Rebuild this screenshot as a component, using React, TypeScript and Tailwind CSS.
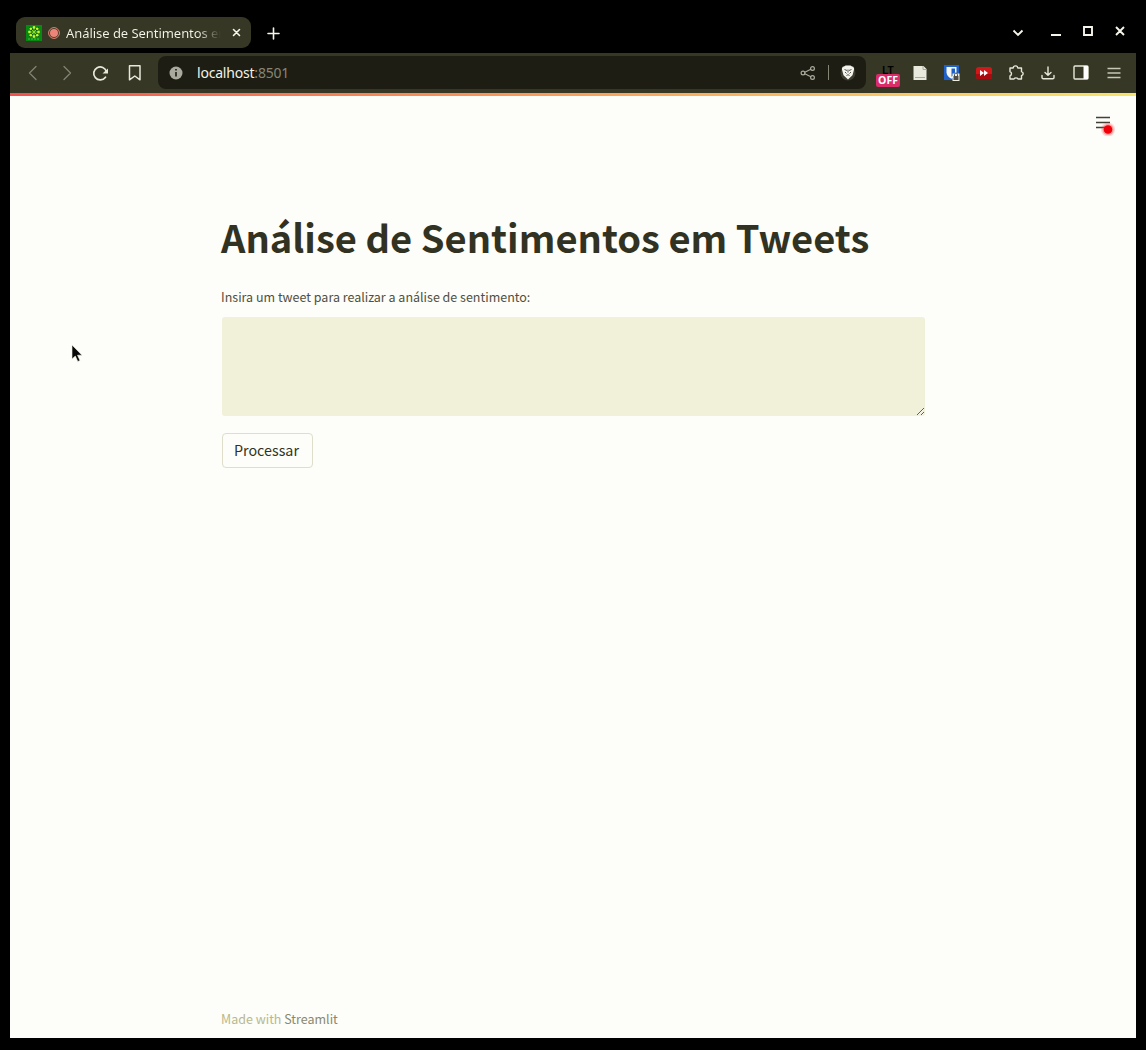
import React from 'react';

const stroke = { fill: 'none', stroke: 'currentColor', strokeLinecap: 'round', strokeLinejoin: 'round' } as const;

function TabStrip() {
  return (
    <div className="flex h-[53px] items-start pl-1.5 pt-[17px] text-[#f5f5e9]">
      <div className="flex h-[31px] w-[235px] items-center rounded-[9px] bg-[#373726] pl-2.5 pr-2.5">
        <svg width="16" height="16" viewBox="0 0 16 16" className="shrink-0">
          <path fill="#078a12" d="M0 0h16v16H0z" />
          <path fill="#045b0c" d="M3 2h10v10H3z" />
          <path d="M2 14h12" stroke="#4fbf3a" strokeDasharray="2 1" />
          <g fill="#c5f532">
            <circle cx="8" cy="2.500" r="1.400" /><circle cx="11.200" cy="3.800" r="1.400" />
            <circle cx="12.500" cy="7" r="1.400" /><circle cx="11.200" cy="10.200" r="1.400" />
            <circle cx="8" cy="11.500" r="1.400" /><circle cx="4.800" cy="10.200" r="1.400" />
            <circle cx="3.500" cy="7" r="1.400" /><circle cx="4.800" cy="3.800" r="1.400" />
          </g>
          <path d="M5 4l6 6M11 4l-6 6M8 3v8M4 7h8" stroke="#8be32a" strokeWidth=".9" />
        </svg>
        <svg width="12" height="12" viewBox="0 0 12 12" className="ml-1.5 shrink-0">
          <circle cx="6" cy="6" r="5.400" fill="#373726" stroke="#e58575" />
          <circle cx="6" cy="6" r="4" fill="#ee8578" />
        </svg>
        <span className="ml-1.5 w-[155px] overflow-hidden whitespace-nowrap bg-linear-to-r from-[#f5f5e9] from-85% to-[#373726] bg-clip-text font-['Noto_Sans'] text-[13px] leading-[20px] tracking-[-0.05px] text-transparent">Análise de Sentimentos em Tweets</span>
        <svg width="9" height="9" viewBox="0 0 9 9" className="ml-auto shrink-0" {...stroke} strokeWidth="1.600"><path d="M1.500 1.500l6 6M7.500 1.500l-6 6" /></svg>
      </div>
      <svg width="13" height="13" viewBox="0 0 13 13" className="ml-4 mt-[9.500px]" {...stroke} strokeWidth="1.600"><path d="M6.500 1v11M1 6.500h11" /></svg>
      <svg width="124" height="22" viewBox="0 0 124 22" className="ml-auto mr-[6px] mt-[3px]" {...stroke} strokeLinecap="butt" strokeLinejoin="miter" strokeWidth="1.900">
        <path d="M7.500 10.500l4.500 4.500 4.500-4.500M45 15h10M78 7h8v8h-8zM110 7l8 8M118 7l-8 8" />
      </svg>
    </div>
  );
}

function Toolbar() {
  return (
    <div className="flex h-[41px] items-center bg-[#373726] pb-[2px] text-[#e8e8da]">
      <svg width="138" height="24" viewBox="0 0 138 24" className="ml-2.5 shrink-0" {...stroke} strokeWidth="1.300">
        <path d="M16 5.500L9.500 12l6.500 6.500M44 5.500l6.500 6.500-6.500 6.500" stroke="#838374" />
        <path d="M85.500 16.200a6.500 6.500 0 1 1 1-5.500" strokeWidth="1.700" />
        <path d="M88 7.500v5h-5.500z" fill="currentColor" stroke="none" />
        <path d="M109.500 4.800h10.500v14l-5.200-3.800-5.300 3.800z" strokeWidth="1.500" />
      </svg>
      <div className="flex h-[33px] w-[708px] shrink-0 items-center rounded-lg bg-[#1d1d13] pl-[11px]">
        <svg width="14" height="14" viewBox="0 0 14 14"><circle cx="7" cy="7" r="6.500" fill="#aaaa9e" /><path d="M7 6v4.500M7 3v1.600" stroke="#1d1d13" strokeWidth="1.600" /></svg>
        <span className="ml-3.5 font-['Noto_Sans'] text-[14px] leading-5 tracking-[-0.200px] text-[#f2f2e6]">localhost<span className="text-[#858576]">:8501</span></span>
        <svg width="16" height="16" viewBox="0 0 16 16" className="ml-auto text-[#aaaa9c]" {...stroke} strokeWidth="1.200">
          <circle cx="3" cy="8" r="1.900" /><circle cx="12.500" cy="3.500" r="1.900" /><circle cx="12.500" cy="12.500" r="1.900" /><path d="M4.800 7.200l6-2.900M4.800 8.800l6 2.900" />
        </svg>
        <div className="ml-[12px] h-[15px] w-px bg-[#858575]" />
        <svg width="16" height="18" viewBox="0 0 16 18" className="ml-[11px] mr-[10px]">
          <circle cx="8" cy="9" r="7.500" fill="#3c3c30" />
          <path d="M4 2.500l1.500-1h5l1.500 1 1.300.3.900 2-.5 2-1.200 4.500L8 15.500l-4.500-4.200L2.300 6.800l-.5-2 .9-2z" fill="#f4f4ee" />
          <path d="M4.500 5.500l2.500 1M11.500 5.500L9 6.500M5 8l1.500 1.500M11 8L9.500 9.500M6.500 11.500L8 10.700l1.500.8M8 5.500v3" stroke="#55554c" fill="none" strokeWidth="1" />
        </svg>
      </div>
      <div className="ml-[10px] mt-[9px] flex h-[22px] w-6 flex-col items-center">
        <span className="h-2 font-['Liberation_Sans'] text-[10px] font-bold leading-[9px] text-black">LT</span>
        <span className="flex h-[13px] w-6 items-center justify-center rounded-[2px] bg-[#d92c69] font-['Open_Sans'] text-[10.500px] font-bold leading-[13px] text-white">OFF</span>
      </div>
      <svg width="14" height="16" viewBox="0 0 14 16" className="ml-[13px] shrink-0"><path d="M1 1h9.500L13.500 4v11H.5V1z" fill="#e9e9dd" /><path d="M2 12.500h10M10 1v3.500h3.500" stroke="#aaaa98" fill="none" /></svg>
      <svg width="18" height="18" viewBox="0 0 18 18" className="ml-4 shrink-0">
        <path d="M1 1h15v15H1z" fill="#1e61c9" /><path d="M3.500 3h10v5.500c0 3-2.500 5-5 6.300-2.500-1.300-5-3.300-5-6.300z" fill="#f7f7f2" />
        <path d="M8.500 4.500H12V8c0 2-1.500 3.500-3.500 4.800z" fill="#1e61c9" /><path d="M9.500 9.500h7V17h-7z" fill="#eeeedf" />
        <path d="M11.500 12v-1.500a1.500 1.500 0 0 1 3 0V12" fill="none" stroke="#504f45" /><path d="M10.500 12h5v4h-5z" fill="#504f45" />
      </svg>
      <svg width="16" height="12" viewBox="0 0 16 12" className="ml-[15px] shrink-0"><rect width="16" height="12" rx="2.500" fill="#d01818" /><path d="M0 7h16v2.500a2.500 2.500 0 0 1-2.500 2.500h-11A2.500 2.500 0 0 1 0 9.500z" fill="#a90a0e" /><path d="M4 3l4 3-4 3zM8 3l4 3-4 3z" fill="#fff" /></svg>
      <svg width="16" height="16" viewBox="0 0 16 16" className="ml-4 shrink-0" {...stroke} strokeWidth="1.400"><path d="M2 3h3.200C5.500.2 9.500.2 9.800 3H13.500v3.700c2.200.8 2.200 3.200 0 4V14H10c-.8-1.500-3.200-1.500-4 0H2v-3.200c2-.8 2-3.300 0-4.100z" /></svg>
      <svg width="14" height="14" viewBox="0 0 14 14" className="ml-[17px] shrink-0" {...stroke} strokeWidth="1.400"><path d="M7 1v8M4 6.500l3 2.800 3-2.800M1 9.500v2q0 1.300 1.300 1.300h9.400q1.300 0 1.300-1.300v-2" /></svg>
      <svg width="16" height="15" viewBox="0 0 16 15" className="ml-[18px] shrink-0"><rect x="1" y="1" width="14" height="13" rx="1" fill="none" stroke="#e8e8da" strokeWidth="1.400" /><path d="M10.500 1H15v13h-4.500z" fill="#fff" /></svg>
      <svg width="14" height="12" viewBox="0 0 14 12" className="ml-[18px] shrink-0"><path d="M.5 1.500h13M.5 6h13M.5 10.500h13" stroke="#c8c8b9" strokeWidth="1.300" /></svg>
    </div>
  );
}

export default function App() {
  return (
    <div className="flex h-[1050px] w-[1146px] flex-col overflow-hidden bg-black px-2.5 pb-3">
      <TabStrip />
      <Toolbar />
      <main className="relative flex grow flex-col bg-[#fdfdf9] pl-[212px] pr-[211px] font-['Noto_Sans_CJK_JP',sans-serif] text-[#323222]">
        <div className="absolute inset-x-0 top-[-1px] h-[3px] bg-linear-to-r from-[#ef524f] to-[#f6e46c]" />
        <svg width="24" height="24" viewBox="0 0 24 24" className="absolute right-5 top-[18px]">
          <path d="M4 5.500h14M4 10.500h14M4 15.500h14" stroke="#414135" strokeWidth="1.700" />
          <circle cx="16" cy="17.500" r="7" fill="#ff3333" opacity=".18" /><circle cx="16" cy="17.500" r="5.600" fill="#ff3333" opacity=".35" /><circle cx="16" cy="17.500" r="4.300" fill="#f00008" />
        </svg>
        <svg width="14" height="20" viewBox="0 0 14 20" className="absolute left-[61px] top-[250px]"><path d="M1 1v14l3.300-3 2.500 5.500 2.200-1-2.500-5.300H11z" fill="#080808" stroke="#f3f3df" strokeWidth=".6" /></svg>
        <h1 className="-ml-px mt-[115px] h-[56px] whitespace-nowrap text-[38.100px] font-bold leading-[56px]">Análise de Sentimentos em Tweets</h1>
        <label htmlFor="tweet" className="-ml-px mt-[22px] h-5 whitespace-nowrap text-[12.500px] leading-5 text-[#505040]">Insira um tweet para realizar a análise de sentimento:</label>
        <textarea id="tweet" className="mt-[10px] block h-[99px] w-[703px] resize-y rounded-[3px] bg-[#f1f1da] outline-none" />
        <button className="mt-[17px] h-[35px] w-[91px] rounded-[4px] border border-[#dedeca] pr-0.5 text-[14.300px] leading-[31px]"><span className="block h-[33px]">Processar</span></button>
        <footer className="-ml-px mb-[9px] mt-auto whitespace-nowrap text-[12.500px] leading-5 text-[#b9b98c]">Made with <span className="text-[#89896f]">Streamlit</span></footer>
      </main>
    </div>
  );
}
